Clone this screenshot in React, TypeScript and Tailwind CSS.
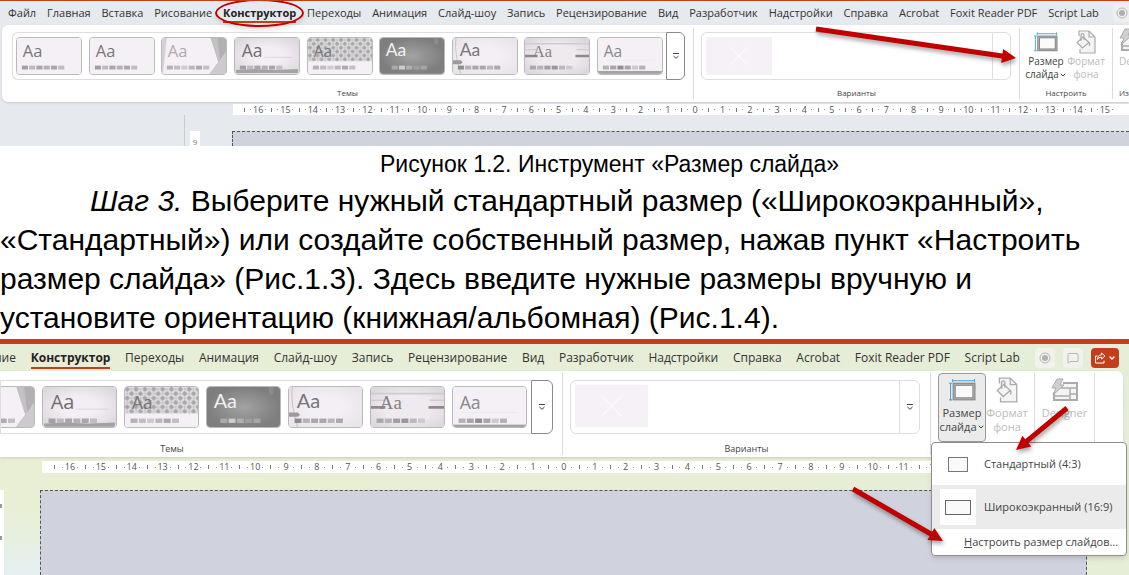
import React from "react";
import clsx from "clsx";
import { ChevronDown, MessageSquare } from "lucide-react";

const tabs = [
  "Переходы",
  "Анимация",
  "Слайд-шоу",
  "Запись",
  "Рецензирование",
  "Вид",
  "Разработчик",
  "Надстройки",
  "Справка",
  "Acrobat",
  "Foxit Reader PDF",
  "Script Lab",
];

const themes = [
  "plain",
  "office",
  "facet",
  "gallery",
  "integral",
  "ion",
  "wisp",
  "organic",
  "retrospect",
];

function Swatches({ x, colors }: { x: number; colors: string[] }) {
  return (
    <>
      {colors.map((color, i) => (
        <rect key={i} x={x + i * 7.5} y="28.5" width="6.3" height="4" fill={color} />
      ))}
    </>
  );
}

const grays = ["#a29ea3", "#bdb9be", "#a9a5aa", "#b4b0b5", "#aaa6ab", "#c0bcc1"];
const softGrays = ["#b5b1b6", "#c0bcc1", "#cdc9ce", "#bbb7bc", "#adaaae", "#c3bfc4"];

function ThemeArt({ name, id }: { name: string; id: string }) {
  const sans = "Open Sans, sans-serif";
  const wide = "Lato, sans-serif";
  const serif = "Liberation Serif, serif";
  return (
    <svg viewBox="0 0 66 37" className="block w-full">
      <defs>
        <radialGradient id={id + "-dark"}>
          <stop offset="0" stopColor="#a3a3a3" />
          <stop offset="1" stopColor="#7e7e7e" />
        </radialGradient>
        <radialGradient id={id + "-light"} r="0.8">
          <stop offset="0.3" stopColor="#f3eef3" />
          <stop offset="1" stopColor="#d3ced3" />
        </radialGradient>
        <pattern id={id + "-dots"} width="8" height="8" patternUnits="userSpaceOnUse">
          <rect width="8" height="8" fill="#dedbdf" />
          <path d="M2 -.5 4.500 2 2 4.500 -.5 2ZM6 3.500 8.500 6 6 8.500 3.500 6Z" fill="#a9a6aa" />
          <path d="M6 1v2M5 2h2M2 5v2M1 6h2" stroke="#b8b5b9" strokeWidth="0.6" />
        </pattern>
      </defs>
      <rect width="66" height="37" fill="#f5f0f6" />
      {(name === "plain" || name === "office") && (
        <>
          <text x="6" y="20" fontSize="17" fontFamily={sans} fill="#777">Aa</text>
          <Swatches x={5} colors={grays} />
        </>
      )}
      {name === "facet" && (
        <>
          <path d="M0 0H5L1 37H0Z" fill="#d4d1d5" />
          <path d="M50 0H66V37H49L58 25Z" fill="#c4c1c5" />
          <path d="M57 0H66V37L60 24Z" fill="#b3b0b4" />
          <path d="M58 25 66 14V37H49Z" fill="#cdcace" />
          <text x="6" y="20" fontSize="17" fontFamily={sans} fill="#aeabaf">Aa</text>
          <Swatches x={5} colors={softGrays} />
        </>
      )}
      {name === "gallery" && (
        <>
          <rect width="66" height="37" fill={`url(#${id}-light)`} />
          <path d="M30 20H59" stroke="#c9c5c9" strokeWidth="0.5" />
          <Swatches x={5} colors={grays} />
          <path d="M1 33 20 32 40 33 65 32V36H1Z" fill="#a5a2a5" />
          <text x="7" y="20" fontSize="18" fontFamily={sans} fill="#6f6f6f">Aa</text>
        </>
      )}
      {name === "integral" && (
        <>
          <rect width="66" height="24" fill={`url(#${id}-dots)`} />
          <text x="6" y="20" fontSize="16" fontFamily={sans} fill="#777">Aa</text>
          <Swatches x={5} colors={softGrays} />
        </>
      )}
      {name === "ion" && (
        <>
          <rect width="66" height="37" fill={`url(#${id}-dark)`} />
          <path d="M56 0h4v6l-2 1-2-1Z" fill="#8c8c8c" />
          <text x="6" y="19" fontSize="18" fontFamily={wide} fill="#f2f2f2">Aa</text>
          <Swatches x={12} colors={["#aaa", "#ccc", "#b0b0b0", "#9e9e9e", "#a6a6a6"]} />
        </>
      )}
      {name === "wisp" && (
        <>
          <rect width="66" height="37" fill={`url(#${id}-light)`} opacity="0.5" />
          <path d="M3 0Q1 14 8 37" stroke="#bbb7bb" strokeWidth="0.7" fill="none" />
          <path d="M0 23h8l2 2-2 2H0Z" fill="#9d9a9e" />
          <text x="7" y="19" fontSize="18" fontFamily={wide} fill="#777">Aa</text>
          <Swatches x={5} colors={["#8f8c90", "#b5b1b6", "#aaa6ab", "#aaa6ab", "#bbb7bc", "#adaaae"]} />
        </>
      )}
      {name === "organic" && (
        <>
          <rect width="66" height="37" fill={`url(#${id}-light)`} />
          <path d="M0 6H66M0 12H66" stroke="#cfcbcf" strokeWidth="1.5" />
          <rect x="13" y="9" width="40" height="20" fill="#eeeaee" />
          <path d="M0 18.500H13M52 18.500H66" stroke="#8c8a8c" strokeWidth="2.5" />
          <text x="8" y="20" fontSize="17" fontFamily={serif} fill="#858285">Aa</text>
          <Swatches x={5} colors={["#aaa6ab", "#b5b1b6", "#a29ea3", "#9a979b", "#bbb7bc", "#cdc9ce"]} />
        </>
      )}
      {name === "retrospect" && (
        <>
          <path d="M7 23H59" stroke="#e6e1e7" strokeWidth="0.5" />
          <text x="6" y="20" fontSize="16" fontFamily={sans} fill="#888">Aa</text>
          <Swatches x={5} colors={["#b5b1b6", "#a9a5aa", "#918e92", "#a9a5aa", "#cdc9ce", "#b5b1b6"]} />
          <rect y="34" width="66" height="3" fill="#a5a2a6" />
        </>
      )}
    </svg>
  );
}

function MoreIcon() {
  return (
    <svg viewBox="0 0 8 8" className="w-2 h-2" fill="none" stroke="#444">
      <path d="M1 1.500h6M1.500 4 4 6.300 6.500 4" />
    </svg>
  );
}

function RecordIcon() {
  return (
    <svg viewBox="0 0 12 12" className="w-3 h-3">
      <circle cx="6" cy="6" r="5" fill="none" stroke="#b5b5b5" />
      <circle cx="6" cy="6" r="3" fill="#b0b0b0" />
    </svg>
  );
}

function ShareIcon() {
  return (
    <svg viewBox="0 0 12 12" className="w-3 h-3" fill="none" stroke="#fff" strokeLinejoin="round">
      <path d="M3.500 4H1.500v7h8.500V8.500" />
      <path d="M7.500 1 11 4 7.500 7V5.200Q4.500 5 3.500 7.500 3.800 3 7.500 2.800Z" />
    </svg>
  );
}

function SlideSizeIcon({ large }: { large?: boolean }) {
  return (
    <svg viewBox="0 0 26 21" className={large ? "w-[27px] h-[22px]" : "w-6 h-5"} fill="none">
      <path d="M3.500 1.500h21M3.500 0v3M24.500 0v3M1.500 4v16M0 4h3M0 20h3" stroke="#4ba3dc" />
      <rect x="5" y="5" width="19" height="14" fill="#fafafa" stroke="#858585" strokeWidth="3" />
      <rect x="5" y="5" width="19" height="14" stroke="#b0b0b0" strokeWidth="1" />
    </svg>
  );
}

function FormatIcon({ large }: { large?: boolean }) {
  return (
    <svg viewBox="0 0 20 24" className={large ? "w-[22px] h-[26px]" : "w-5 h-6"} fill="#f4f4f4" stroke="#ababab" strokeWidth="1.200">
      <path d="M3 6V1h10l6 6v16H4v-4" />
      <path d="M13 1v6h6" fill="none" />
      <path d="M7 7 13 12.500 6.500 18 1 12.500Z" />
      <path d="M5 11V5a1.500 1.500 0 0 1 3 0v5M13 12.500q1.500 1.500 0 3.500" fill="none" />
    </svg>
  );
}

function DesignerIcon() {
  return (
    <svg viewBox="0 0 28 25" className="w-7 h-[25px]" fill="#f4f4f4" stroke="#ababab" strokeWidth="1.500">
      <path d="M3 14v8h23V5H12" strokeWidth="2" />
      <path d="M10 10h15M19 10v12M19 16h6M4 18h14" fill="none" />
      <path d="M6 1h6L9 7h4L2 17 5 10H1Z" fill="#d0d0d0" strokeWidth="1" />
    </svg>
  );
}

function Arrow({ className, w, h, x1, y1, x2, y2 }: any) {
  const length = Math.hypot(x2 - x1, y2 - y1);
  const angle = (Math.atan2(y2 - y1, x2 - x1) * 180) / Math.PI;
  return (
    <svg
      width={w}
      height={h}
      className={clsx("absolute z-20 overflow-visible pointer-events-none drop-shadow-[1px_3px_2px_rgba(0,0,0,0.35)]", className)}
    >
      <g transform={`translate(${x1} ${y1}) rotate(${angle})`} fill="#c00000">
        <path d={`M0 -2.500H${length - 14}V-7L${length} 0 ${length - 14} 7V2.500H0Z`} />
      </g>
    </svg>
  );
}

function TabBar({ large }: { large?: boolean }) {
  return (
    <nav
      className={clsx(
        "flex items-center whitespace-nowrap text-[#333] shrink-0",
        large ? "h-[27px] gap-[15px] text-[12px] -ml-1.5 pr-2.5" : "h-6 gap-3.5 text-[11px] leading-4 pl-2"
      )}
    >
      <div className="flex flex-1 justify-between">
        {large ? (
          <button>ние</button>
        ) : (
          ["Файл", "Главная", "Вставка", "Рисование"].map((tab) => <button key={tab}>{tab}</button>)
        )}
        <button className="relative font-bold text-[#222]">
          Конструктор
          <span className="absolute inset-x-0 -bottom-0.5 h-0.5 bg-[#c43e1c]" />
          {!large && (
            <span className="absolute z-10 -inset-x-2 -inset-y-1.5 rounded-[50%] border-2 border-[#c00000] shadow-md" />
          )}
        </button>
        {tabs.map((tab) => (
          <button key={tab}>{tab}</button>
        ))}
      </div>
      {large ? (
        <div className="flex gap-2">
          <button aria-label="Запись экрана" className="grid place-items-center w-5 h-5 rounded-sm bg-[#f1f2ec]">
            <RecordIcon />
          </button>
          <button aria-label="Примечания" className="grid place-items-center w-5 h-5 rounded-sm bg-[#f1f2ec]">
            <MessageSquare size={12} color="#b5b5b5" />
          </button>
          <button aria-label="Поделиться" className="flex items-center justify-center gap-0.5 w-7 h-5 rounded-sm bg-[#c43e1c] text-white">
            <ShareIcon />
            <ChevronDown size={8} strokeWidth={4} />
          </button>
        </div>
      ) : (
        <button aria-label="Запись экрана" className="flex items-center w-4 h-[18px] pl-[3px] rounded-l-sm bg-[#efefef]">
          <RecordIcon />
        </button>
      )}
    </nav>
  );
}

function Group({ label, className, children, large }: any) {
  return (
    <section className={clsx("flex flex-col justify-between border-r border-[#dcdcdc] shrink-0", className)}>
      {children}
      <p className={clsx("text-center leading-3 text-[#444]", large ? "text-[9px]" : "text-[8px]")}>{label}</p>
    </section>
  );
}

function Themes({ large }: { large?: boolean }) {
  return (
    <div className={clsx("flex", large ? "h-[54px] mt-[7px] mr-[9px]" : "h-12 mt-1 ml-[10px] mr-2")}>
      <div
        className={clsx(
          "flex flex-1 items-center border border-r-0 border-[#dedede] overflow-hidden",
          large ? "justify-end gap-[7px] pr-1" : "justify-between rounded-l-md px-[3px]"
        )}
      >
        {themes.slice(large ? 2 : 0).map((theme) => (
          <button
            key={theme}
            aria-label={theme}
            className={clsx(
              "shrink-0 rounded-sm border border-[#b9b9b9] overflow-hidden",
              large ? "w-[75px]" : "w-[66px]"
            )}
          >
            <ThemeArt name={theme} id={(large ? "l-" : "s-") + theme} />
          </button>
        ))}
      </div>
      <button
        aria-label="Ещё темы"
        className={clsx("grid place-items-center border border-[#8a8a8a] rounded-r-md", large ? "w-[22px]" : "w-[19px]")}
      >
        <MoreIcon />
      </button>
    </div>
  );
}

function Variants({ large }: { large?: boolean }) {
  return (
    <div className={clsx("flex border border-[#dedede] rounded-md", large ? "h-[54px] mt-[7px] ml-[7px] mr-[10px]" : "h-12 mt-1 ml-[7px] mr-2")}>
      <div className="flex-1 p-1">
        <svg
          viewBox="0 0 66 38"
          className={clsx("bg-[#f6f1f7]", large ? "h-[42px]" : "h-[38px]")}
          stroke="#fff"
          strokeOpacity="0.7"
          fill="none"
        >
          <path d="M24 10 42 28M42 10 24 28" />
        </svg>
      </div>
      <button
        aria-label="Ещё варианты"
        className={clsx("grid place-items-center border-l border-[#dedede]", large ? "w-5" : "w-[18px]")}
      >
        {large && <MoreIcon />}
      </button>
    </div>
  );
}

function Ruler({ large }: { large?: boolean }) {
  const numbers: number[] = [];
  for (let i = -16; i <= (large ? 16 : 15); i++) {
    numbers.push(Math.abs(i));
  }
  return (
    <div
      className={clsx(
        "flex bg-white text-[9px] text-[#555] shrink-0",
        large ? "h-3 mt-1 ml-[42px] mr-11 px-3" : "h-[11px] mt-0.5 ml-[233px] px-[11px]"
      )}
    >
      {numbers.map((n, i) => (
        <div key={i} className="flex flex-1 items-center justify-center">
          <span className="w-px h-1 bg-[#777] mr-auto" />
          <span className="w-px h-px bg-[#999]" />
          <span className="w-3.5 text-center leading-3">{n}</span>
          <span className="w-px h-px bg-[#999] mr-auto" />
        </div>
      ))}
    </div>
  );
}

function SizeMenu() {
  return (
    <div className="absolute z-10 right-0.5 top-[98px] w-[196px] rounded border border-[#8f8f8f] bg-white shadow-md text-[11px] text-[#444] overflow-hidden">
      <button className="flex items-center gap-2 w-full h-[42px] pl-2">
        <span className="grid place-items-center w-9 h-9">
          <span className="w-5 h-[15px] border border-[#777] bg-[#fafafa]" />
        </span>
        Стандартный (4:3)
      </button>
      <button className="flex items-center gap-2 w-full h-11 pl-2 bg-[#ebebeb]">
        <span className="grid place-items-center w-9 h-9 bg-white">
          <span className="w-[26px] h-[15px] border border-[#666] bg-[#fafafa]" />
        </span>
        Широкоэкранный (16:9)
      </button>
      <button className="block h-[26px] pl-8">
        <span className="underline">Н</span>астроить размер слайдов...
      </button>
    </div>
  );
}

function ToolButton({ icon, lines, active, disabled, menu, large }: any) {
  return (
    <button
      disabled={disabled}
      className={clsx(
        "flex flex-col items-center border rounded",
        large ? "h-[69px] pt-0.5 text-[11px] leading-[14px]" : "h-14 pt-px w-10 text-[10px] leading-[13px]",
        large && (active ? "w-12" : "w-[42px]"),
        active ? "bg-[#ebebeb] border-[#999]" : "border-transparent",
        disabled ? "text-[#bbb]" : "text-[#444]"
      )}
    >
      <span className={clsx("flex items-center", large ? "h-7 mb-0.5" : "h-6 mb-px")}>{icon}</span>
      <span>{lines[0]}</span>
      <span className="flex items-center">
        {lines[1]}
        {menu && <ChevronDown size={8} strokeWidth={3} />}
      </span>
    </button>
  );
}

function SmallFigure() {
  return (
    <figure className="relative h-[146px] flex flex-col shrink-0 overflow-hidden border-t border-[#c43e1c] bg-[#e6e9ed]">
      <TabBar />
      <div className="flex h-[77px] ml-0.5 py-[3px] shrink-0 bg-white rounded-l-md shadow">
        <Group label="Темы" className="w-[692px]">
          <Themes />
        </Group>
        <Group label="Варианты" className="flex-1">
          <Variants />
        </Group>
        <Group label="Настроить" className="w-[93px]">
          <div className="flex justify-center">
            <ToolButton icon={<SlideSizeIcon />} lines={["Размер", "слайда"]} menu />
            <ToolButton icon={<FormatIcon />} lines={["Формат", "фона"]} disabled />
          </div>
        </Group>
        <div className="flex flex-col w-4 pl-1.5 text-[10px] leading-[13px] text-[#bbb] overflow-hidden">
          <span className="h-[27px] w-7">
            <DesignerIcon />
          </span>
          <span>De</span>
          <span className="mt-auto text-[8px] leading-3 text-[#444]">Из</span>
        </div>
      </div>
      <Ruler />
      <div className="flex flex-1 items-end">
        <div className="w-[185px] h-full border-r border-[#c9ccd0]" />
        <div className="w-2.5 h-[15px] ml-[5px] bg-white text-[8px] text-[#777] leading-[22px] text-center overflow-hidden">
          9
        </div>
        <div className="flex-1 h-[15px] ml-8 border-t border-l border-dashed border-[#555] bg-[#d0d3dd]" />
      </div>
      <Arrow className="right-[113px] top-7" w={200} h={30} x1={0} y1={0} x2={200} y2={29} />
    </figure>
  );
}

function LargeFigure() {
  return (
    <figure className="relative flex flex-col flex-1 min-h-[236px] overflow-hidden border-t-[5px] border-[#c43e1c] bg-[radial-gradient(ellipse_at_bottom_left,#e5f0f2,#e9efd4_20%,#e6edd8)]">
      <TabBar large />
      <div className="flex h-[86px] mr-1.5 pt-0.5 pb-0.5 pr-7 shrink-0 bg-white rounded-r-md shadow">
        <Group
          large
          label={<span className="pr-[218px]">Темы</span>}
          className="w-[563px]"
        >
          <Themes large />
        </Group>
        <Group large label="Варианты" className="flex-1">
          <Variants large />
        </Group>
        <Group large className="w-[104px]">
          <div className="flex pl-[7px]">
            <ToolButton large active icon={<SlideSizeIcon large />} lines={["Размер", "слайда"]} menu />
            <ToolButton large icon={<FormatIcon large />} lines={["Формат", "фона"]} disabled />
          </div>
        </Group>
        <Group large className="w-[60px]">
          <div className="flex justify-center">
            <ToolButton large icon={<DesignerIcon />} lines={["Designer"]} disabled />
          </div>
        </Group>
      </div>
      <Ruler large />
      <div className="flex flex-1 mt-[17px]">
        <div className="flex flex-col w-1 py-3.5 gap-7 bg-white">
          <span className="w-0.5 h-1 bg-[#999]" />
          <span className="w-0.5 h-1 bg-[#999]" />
        </div>
        <div className="flex-1 ml-9 mr-[42px] border border-b-0 border-dashed border-[#555] bg-[#d0d3dd]" />
      </div>
      <SizeMenu />
      <Arrow className="right-[62px] top-16" w={51} h={45} x1={51} y1={0} x2={0} y2={42} />
      <Arrow className="right-[186px] top-[145px]" w={90} h={52} x1={0} y1={0} x2={90} y2={52} />
    </figure>
  );
}

export default function App() {
  return (
    <main className="flex flex-col h-screen overflow-hidden bg-white font-['Open_Sans',sans-serif]">
      <SmallFigure />
      <article className="shrink-0 h-[193px] font-['Liberation_Sans',Arial,sans-serif] text-black">
        <p className="pl-[90px] pt-[3px] pb-0.5 text-center text-[23px] leading-[30px]">
          Рисунок 1.2. Инструмент «Размер слайда»
        </p>
        <p className="pr-8 indent-[90px] text-[30px] leading-[39px]">
          <em>Шаг 3.</em> Выберите нужный стандартный размер («Широкоэкранный», «Стандартный») или создайте
          собственный размер, нажав пункт «Настроить размер слайда» (Рис.1.3). Здесь введите нужные размеры вручную и
          установите ориентацию (книжная/альбомная) (Рис.1.4).
        </p>
      </article>
      <LargeFigure />
    </main>
  );
}
